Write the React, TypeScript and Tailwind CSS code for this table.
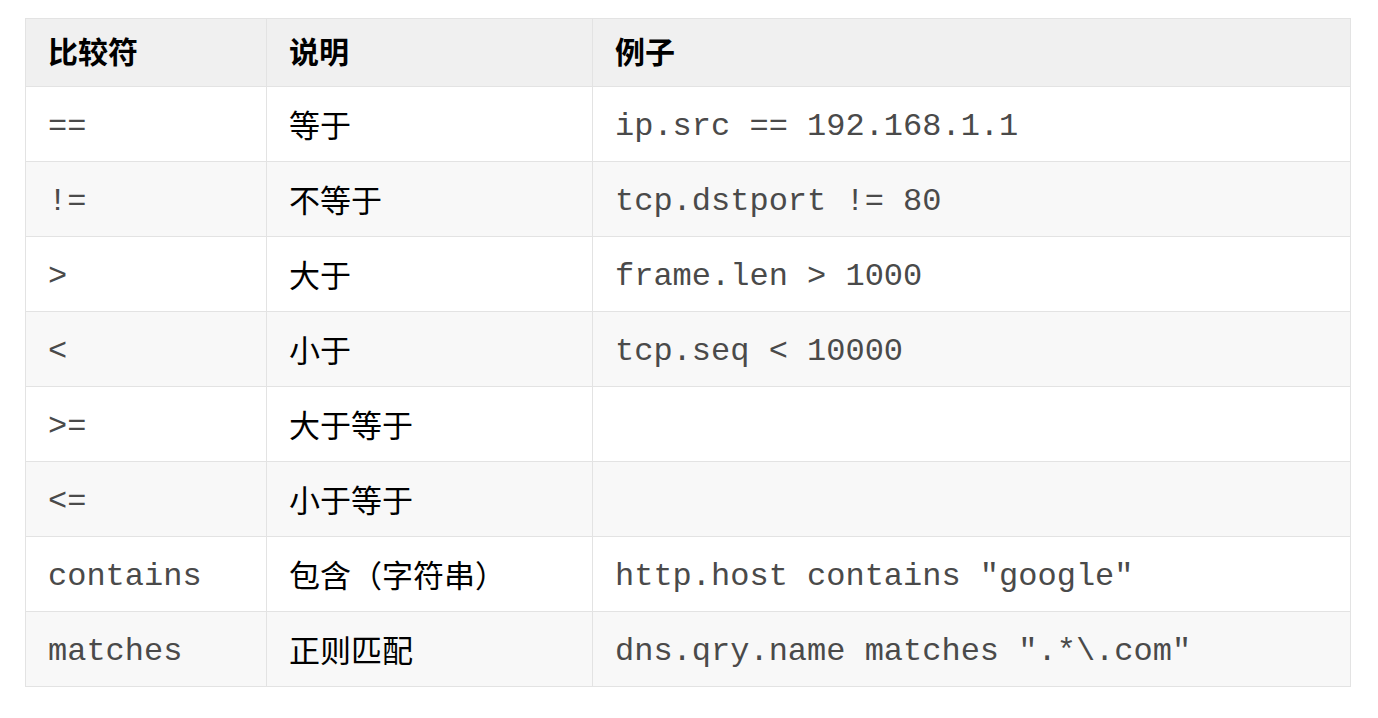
import React from "react";

const rows: [string, string, string][] = [
  ["==", "等于", "ip.src == 192.168.1.1"],
  ["!=", "不等于", "tcp.dstport != 80"],
  [">", "大于", "frame.len > 1000"],
  ["<", "小于", "tcp.seq < 10000"],
  [">=", "大于等于", ""],
  ["<=", "小于等于", ""],
  ["contains", "包含（字符串）", 'http.host contains "google"'],
  ["matches", "正则匹配", 'dns.qry.name matches ".*\\.com"'],
];

const cjk = { fontFamily: '"Noto Sans CJK SC", "Noto Sans", sans-serif' };

export default function App() {
  return (
    <div className="w-[1378px] h-[718px] bg-white pt-[18px] pl-[25px]">
      <table
        className="w-[1326px] border-collapse table-fixed text-black"
        style={cjk}
      >
        <colgroup>
          <col className="w-[241px]" />
          <col className="w-[326px]" />
          <col />
        </colgroup>
        <thead>
          <tr className="bg-[#f0f0f0]">
            {["比较符", "说明", "例子"].map((h) => (
              <th
                key={h}
                className="h-[68px] border border-[#e3e3e3] px-[22px] pb-[5px] text-left align-middle text-[30px] font-bold leading-none"
              >
                {h}
              </th>
            ))}
          </tr>
        </thead>
        <tbody>
          {rows.map(([op, desc, ex], i) => (
            <tr key={op} className={i % 2 === 1 ? "bg-[#f8f8f8]" : "bg-white"}>
              <td className="h-[75px] border border-[#e3e3e3] px-[22px] pt-[6px] align-middle font-['Liberation_Mono',monospace] text-[32px] leading-none text-[#4a4a4a]">
                {op}
              </td>
              <td className="h-[75px] border border-[#e3e3e3] px-[22px] pb-[2px] align-middle text-[31px] leading-none text-black">
                {desc}
              </td>
              <td className="h-[75px] border border-[#e3e3e3] px-[22px] pt-[6px] align-middle font-['Liberation_Mono',monospace] text-[32px] leading-none text-[#4a4a4a] whitespace-pre">
                {ex}
              </td>
            </tr>
          ))}
        </tbody>
      </table>
    </div>
  );
}
